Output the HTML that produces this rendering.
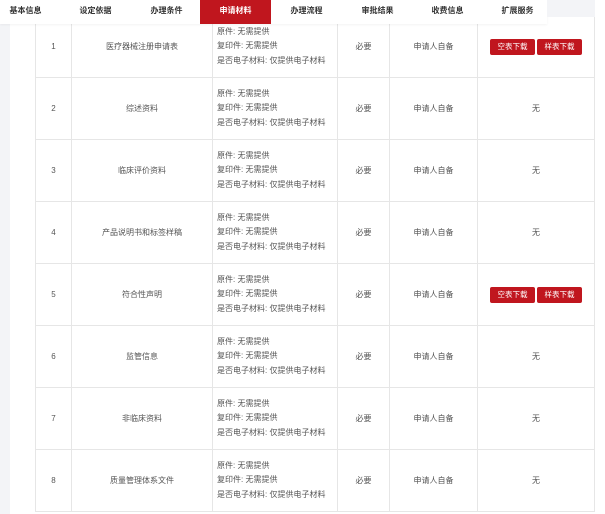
<!DOCTYPE html>
<html><head><meta charset="utf-8"><style>
*{margin:0;padding:0;box-sizing:border-box}
body{width:605px;height:514px;overflow:hidden;background:#f3f4f7;font-family:"Liberation Sans","Noto Sans CJK SC",sans-serif;color:#555;position:relative}
.panel{position:absolute;left:10px;top:0;width:595px;height:514px;background:#fff}
table{position:absolute;left:35px;top:15px;border-collapse:collapse;font-size:8px}
td{border:1px solid #e6e6e6;height:62px;text-align:center;vertical-align:middle}
td.l{text-align:left;padding-left:4px;line-height:14.5px}
.btn{display:inline-block;background:#c0161e;color:#fff;font-size:7.5px;width:45px;height:16px;line-height:16px;border-radius:2px;margin:0 1px}
.tabs{position:absolute;left:0;top:0;width:547px;height:24px;background:#fff;box-shadow:0 1px 2px rgba(0,0,0,.05)}
.tab{position:absolute;top:0;width:71px;height:24px;line-height:22px;text-align:center;font-size:8px;color:#333;font-weight:bold}
.tab.a{background:#c0161e;color:#fff}
.rt{position:absolute;left:547px;top:0;width:48px;height:17px;background:#f3f4f7}
</style></head><body>
<div class="panel"></div>
<table>
<colgroup><col style="width:36px"><col style="width:141px"><col style="width:125px"><col style="width:52px"><col style="width:88px"><col style="width:117px"></colgroup>
<tr><td>1</td><td>医疗器械注册申请表</td><td class="l">原件: 无需提供<br>复印件: 无需提供<br>是否电子材料: 仅提供电子材料</td><td>必要</td><td>申请人自备</td><td><span class="btn">空表下载</span><span class="btn">样表下载</span></td></tr>
<tr><td>2</td><td>综述资料</td><td class="l">原件: 无需提供<br>复印件: 无需提供<br>是否电子材料: 仅提供电子材料</td><td>必要</td><td>申请人自备</td><td>无</td></tr>
<tr><td>3</td><td>临床评价资料</td><td class="l">原件: 无需提供<br>复印件: 无需提供<br>是否电子材料: 仅提供电子材料</td><td>必要</td><td>申请人自备</td><td>无</td></tr>
<tr><td>4</td><td>产品说明书和标签样稿</td><td class="l">原件: 无需提供<br>复印件: 无需提供<br>是否电子材料: 仅提供电子材料</td><td>必要</td><td>申请人自备</td><td>无</td></tr>
<tr><td>5</td><td>符合性声明</td><td class="l">原件: 无需提供<br>复印件: 无需提供<br>是否电子材料: 仅提供电子材料</td><td>必要</td><td>申请人自备</td><td><span class="btn">空表下载</span><span class="btn">样表下载</span></td></tr>
<tr><td>6</td><td>监管信息</td><td class="l">原件: 无需提供<br>复印件: 无需提供<br>是否电子材料: 仅提供电子材料</td><td>必要</td><td>申请人自备</td><td>无</td></tr>
<tr><td>7</td><td>非临床资料</td><td class="l">原件: 无需提供<br>复印件: 无需提供<br>是否电子材料: 仅提供电子材料</td><td>必要</td><td>申请人自备</td><td>无</td></tr>
<tr><td>8</td><td>质量管理体系文件</td><td class="l">原件: 无需提供<br>复印件: 无需提供<br>是否电子材料: 仅提供电子材料</td><td>必要</td><td>申请人自备</td><td>无</td></tr>
</table>
<div class="tabs">
<div class="tab" style="left:-10px">基本信息</div>
<div class="tab" style="left:60px">设定依据</div>
<div class="tab" style="left:131px">办理条件</div>
<div class="tab a" style="left:200px">申请材料</div>
<div class="tab" style="left:271px">办理流程</div>
<div class="tab" style="left:342px">审批结果</div>
<div class="tab" style="left:412px">收费信息</div>
<div class="tab" style="left:482px">扩展服务</div>
</div>
<div class="rt"></div>
</body></html>
